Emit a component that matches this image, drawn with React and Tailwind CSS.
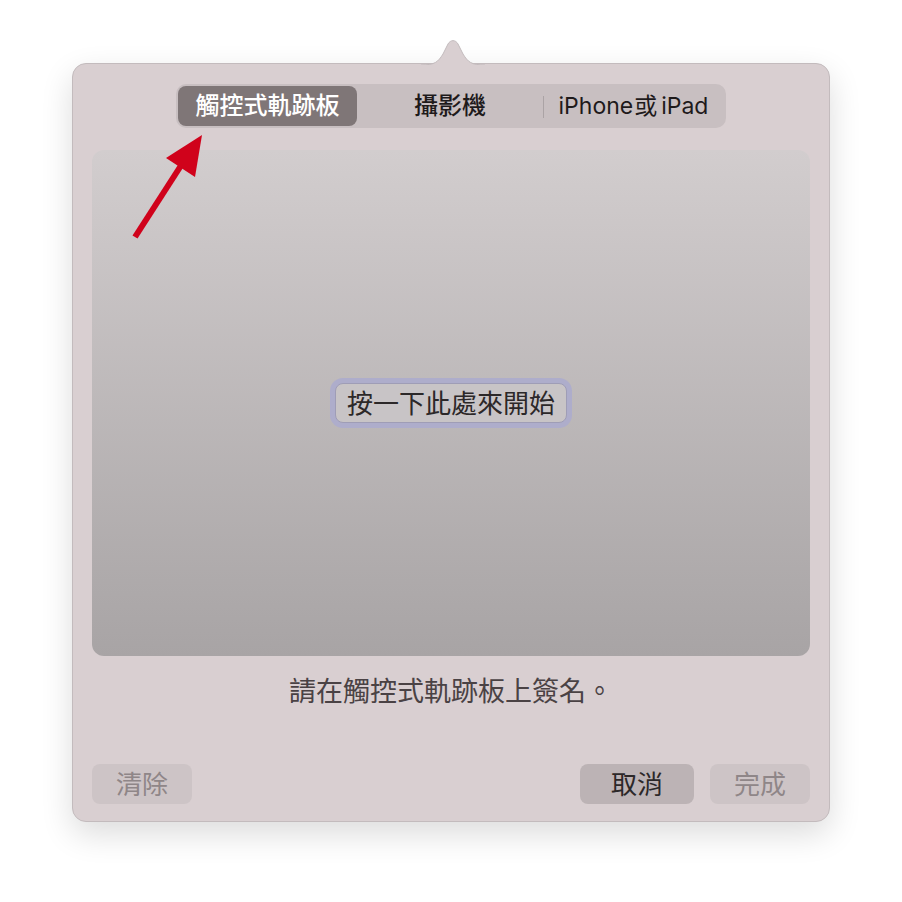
import React, { useState } from 'react'

const font = { fontFamily: 'Inter, "Noto Sans CJK TC", sans-serif' }

/* ===== popover tip ===== */
function Tip() {
  return (
    <svg
      className="absolute left-[348px] top-[-26px]"
      width="64"
      height="28"
      viewBox="0 0 64 28"
    >
      <path
        d="M0 27 C14 27 17 24 22 16 L27 6 C29.5 1.5 34.5 1.5 37 6 L42 16 C47 24 50 27 64 27"
        fill="#d9cfd1"
        stroke="#c3bbbd"
        strokeWidth="1"
      />
      <rect x="0" y="27" width="64" height="2" fill="#d9cfd1" />
    </svg>
  )
}

/* ===== red annotation arrow ===== */
function RedArrow() {
  return (
    <svg className="absolute left-0 top-0 pointer-events-none" width="902" height="902">
      <line x1="135" y1="237" x2="182" y2="164" stroke="#d0021b" strokeWidth="6" />
      <polygon points="202,135 166,158 195,177" fill="#d0021b" />
    </svg>
  )
}

export default function App() {
  const [tab, setTab] = useState(0)
  const tabs = ['觸控式軌跡板', '攝影機', 'iPhone']

  return (
    <div className="relative w-[902px] h-[902px] bg-white pt-[63px] pl-[72px]" style={font}>
      <div className="relative w-[758px] h-[759px] rounded-[14px] bg-[#d9cfd1] border border-[#c3bbbd] shadow-[0_12px_32px_rgba(0,0,0,0.14)] flex flex-col items-center">
        <Tip />

        {/* ===== segmented ===== */}
        <div className="mt-[20px] w-[550px] h-[44px] rounded-[10px] bg-[#c8bfc1] p-[2px] grid grid-cols-[179px_186px_1fr] items-center">
          {tabs.map((t, i) => (
            <button
              key={t}
              onClick={() => setTab(i)}
              className={`relative h-[40px] rounded-[8px] text-[24px] font-medium flex items-center justify-center ${
                tab === i ? 'bg-[#7f7677] text-white' : 'text-[#1e1a1b]'
              }`}
            >
              {i === 2 && <span className="absolute left-[0px] top-[10px] w-[1px] h-[22px] bg-[#aba3a5]" />}
              {i === 2 ? (
                <span className="text-[23px] font-normal">iPhone<span className="ml-[1px] mr-[4px]">或</span>iPad</span>
              ) : (
                t
              )}
            </button>
          ))}
        </div>

        {/* ===== trackpad ===== */}
        <div className="mt-[22px] w-[718px] h-[506px] rounded-[12px] bg-gradient-to-b from-[#d2cdce] to-[#a8a4a5] flex items-center justify-center">
          <button className="h-[40px] w-[232px] rounded-[8px] border border-[#9f9db6] ring-[5px] ring-[#aeadcb] bg-[#c8c4c6] text-[26px] text-[#2c2829] flex items-center justify-center">
            按一下此處來開始
          </button>
        </div>

        {/* ===== hint ===== */}
        <p className="mt-[18px] h-[36px] leading-[36px] text-[27px] text-[#4a4244]">
          請在觸控式軌跡板上簽名。
        </p>

        {/* ===== actions ===== */}
        <div className="mt-[54px] w-[718px] flex items-center gap-[16px]">
          <button className="w-[100px] h-[40px] rounded-[8px] bg-[#cdc4c6] text-[26px] text-[#8f8688]">清除</button>
          <div className="flex-1" />
          <button className="w-[114px] h-[40px] rounded-[8px] bg-[#bcb3b5] text-[26px] text-[#2c2829]">取消</button>
          <button className="w-[100px] h-[40px] rounded-[8px] bg-[#cdc4c6] text-[26px] text-[#8f8688]">完成</button>
        </div>
      </div>

      <RedArrow />
    </div>
  )
}
